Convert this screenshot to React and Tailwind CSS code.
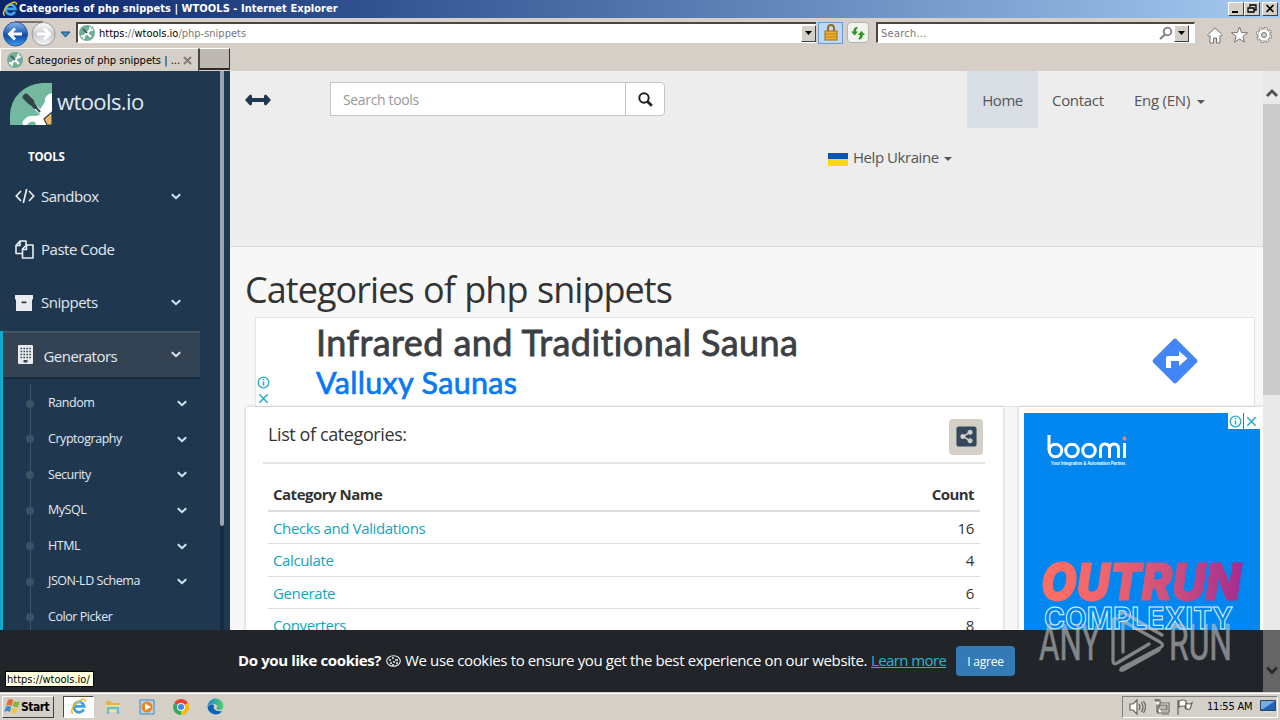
import { FaShareAltSquare } from "react-icons/fa";

const menuItems = [
  { name: "Sandbox", icon: CodeIcon, arrow: true },
  { name: "Paste Code", icon: CopyIcon, arrow: false },
  { name: "Snippets", icon: ArchiveIcon, arrow: true },
];

const generators = [
  { name: "Random", arrow: true },
  { name: "Cryptography", arrow: true },
  { name: "Security", arrow: true },
  { name: "MySQL", arrow: true },
  { name: "HTML", arrow: true },
  { name: "JSON-LD Schema", arrow: true },
  { name: "Color Picker", arrow: false },
];

const categories = [
  { name: "Checks and Validations", count: 16 },
  { name: "Calculate", count: 4 },
  { name: "Generate", count: 6 },
  { name: "Converters", count: 8 },
];

function CodeIcon() {
  return (
    <svg width="20" height="16" viewBox="0 0 20 16" fill="none" stroke="#e7edf3" strokeWidth="1.7">
      <path d="M6 3 1.3 8 6 13M14 3l4.700 5L14 13M11.700 1 8.300 15" />
    </svg>
  );
}

function CopyIcon() {
  return (
    <svg width="19" height="19" viewBox="0 0 19 19" fill="none" stroke="#e7edf3" strokeWidth="1.6" strokeLinejoin="round">
      <path d="M7 13.500H1V5.500L5 1h6v4M5 1v4.500H1" />
      <path d="M7.500 9 11.500 5H18v13H7.500zM11.500 5v4.500h-4" />
    </svg>
  );
}

function ArchiveIcon() {
  return (
    <svg width="18" height="16" viewBox="0 0 18 16">
      <path fill="#e9ebee" d="M0 0h18v4.500H0zM1 4h16v12H1z" />
      <rect x="6.500" y="6.500" width="5" height="1.800" rx=".9" fill="#1f3850" />
    </svg>
  );
}

function BuildingIcon() {
  return (
    <svg width="15" height="19" viewBox="0 0 15 19">
      <rect width="15" height="19" rx="1" fill="#e9ebee" />
      <path stroke="#33434f" strokeWidth="1.500" strokeDasharray="1.600 1.300" d="M2.500 3.500h11M2.500 6.500h11M2.500 9.500h11M2.500 12.500h11" />
      <path fill="#33434f" d="M5.500 15h4v2.500h-4z" />
    </svg>
  );
}

function Chevron() {
  return (
    <svg width="10" height="7" viewBox="0 0 10 7" fill="none" stroke="#d5e4f0" strokeWidth="2">
      <path d="m.8 1.200 4.200 4 4.200-4" />
    </svg>
  );
}

function Caret() {
  return (
    <svg width="8" height="4" viewBox="0 0 8 4">
      <path fill="#555" d="M0 0h8L4 4z" />
    </svg>
  );
}

function SiteIcon() {
  return (
    <svg width="16" height="16" viewBox="0 0 16 16" className="shrink-0">
      <circle cx="8" cy="8" r="8" fill="#6fae98" />
      <path stroke="#fff" strokeWidth="2.200" d="m4 12 8-8" />
      <path stroke="#41515a" strokeWidth="1.700" d="m4 4 4 4" />
      <path stroke="#fff" strokeWidth="2.200" d="m8.500 8.500 3.500 3.500" />
      <circle cx="12" cy="4" r="2.200" fill="#fff" />
      <circle cx="4" cy="12" r="2.200" fill="#fff" />
      <path stroke="#6fae98" strokeWidth="1.500" d="M12 4l2-2M4 12l-2 2" />
    </svg>
  );
}

function LogoIcon() {
  return (
    <svg width="42" height="42" viewBox="0 0 42 42" className="shrink-0">
      <path fill="#72b9a0" d="M0 42V32A34 32 0 0 1 32 0h10v42z" />
      <path fill="#fff" d="M42 10q-8 2-7 9l-6 9 3 3-6 2q-8-1-11 3-4 3-2 6h29z" />
      <path stroke="#fff" strokeWidth="4" d="m25 24 12 11" />
      <path stroke="#34434c" strokeWidth="2" d="m24 22 6 7" />
      <path stroke="#34434c" strokeWidth="6.500" strokeLinecap="round" d="m16 14 5 5" />
      <path stroke="#34434c" strokeWidth="4" strokeLinecap="round" d="m20 18 5 6" />
      <path fill="#e7b565" stroke="#34434c" strokeWidth="1.200" d="m34 36 8-7v13h-5z" />
      <path fill="#72b9a0" d="M17 42q3-5 8-3l1 3z" />
    </svg>
  );
}

function IeIcon({ size = 17 }) {
  return (
    <svg width={size} height={size} viewBox="0 0 18 18" fill="none" className="shrink-0">
      <path stroke="#3aa5e6" strokeWidth="3" d="M14.500 12A5.500 5.500 0 1 1 15 8.800H5" />
      <path stroke="#8ed2f7" strokeWidth="1" d="M4.500 8a5 5 0 0 1 8-2.500" />
      <path stroke="#f0bd24" strokeWidth="1.600" d="M3 16.500C-.5 14 4 6 10 2.800c4-2.100 7-1.800 6 1.400" />
    </svg>
  );
}

function TitleBar() {
  return (
    <div className="flex h-[18px] items-center bg-gradient-to-r from-[#0a246a] to-[#a6caf0] pl-[2px] pr-[2px]">
      <IeIcon size={16} />
      <div className="ml-[1px] flex-1 whitespace-nowrap pt-px text-[11px] font-bold text-white tracking-[0.05px]">
        Categories of php snippets | WTOOLS - Internet Explorer
      </div>
      {["min", "restore", "close"].map((type) => (
        <div
          key={type}
          className="h-[14px] w-4 border border-t-white border-l-white border-r-[#404040] border-b-[#404040] bg-[#d4d0c8] last:ml-[2px]"
        >
          <svg width="14" height="12" viewBox="0 0 14 12" fill="none" stroke="#000" strokeWidth="1.600">
            {type === "min" && <path d="M3 9h6" strokeWidth="2" />}
            {type === "restore" && <path d="M5 4V2h6v5H9M3 5h6v4H3z" strokeWidth="1.300" />}
            {type === "close" && <path d="m3.500 2 7 7m0-7-7 7" />}
          </svg>
        </div>
      ))}
    </div>
  );
}

function DropButton() {
  return (
    <div className="flex h-[17px] w-[15px] items-center justify-center border border-t-white border-l-white border-r-[#404040] border-b-[#404040] bg-[#d4d0c8]">
      <svg width="7" height="4" viewBox="0 0 7 4"><path d="M0 0h7L3.500 4z" /></svg>
    </div>
  );
}

function AddressBar() {
  return (
    <div className="flex h-[30px] items-center bg-[#d6cfc8] pb-[1px] text-[11px]">
      <svg width="74" height="28" viewBox="0 0 74 28" className="shrink-0">
        <defs>
          <linearGradient id="back" x1="0" y1="0" x2="0" y2="1">
            <stop offset="0" stopColor="#8bb6e8" />
            <stop offset=".45" stopColor="#2465c0" />
            <stop offset=".55" stopColor="#0b48ad" />
            <stop offset="1" stopColor="#3da0ef" />
          </linearGradient>
          <linearGradient id="forward" x1="0" y1="0" x2="0" y2="1">
            <stop offset="0" stopColor="#fff" />
            <stop offset=".5" stopColor="#c9ccd0" />
            <stop offset="1" stopColor="#f4f6f8" />
          </linearGradient>
        </defs>
        <path d="M15 3h28" stroke="#77736f" strokeWidth="2" />
        <circle cx="15.500" cy="15" r="12" fill="url(#back)" stroke="#35548b" />
        <circle cx="43.500" cy="15" r="11.500" fill="url(#forward)" stroke="#9a9a9a" />
        <path d="M22 15H10M15 9.500 9.500 15l5.500 5.500" stroke="#fff" strokeWidth="3" fill="none" />
        <path d="M37 15h12M44 9.500l5.500 5.500-5.500 5.500" stroke="#fff" strokeWidth="3" fill="none" />
        <path d="M61 13h9l-4.500 5z" fill="#3690cb" stroke="#204b75" />
      </svg>
      <div className="ml-[2px] flex h-[21px] w-[740px] items-center border-t-2 border-l-2 border-[#51443d] border-b border-b-white bg-white pl-[1px]">
        <SiteIcon />
        <span className="ml-[4px] flex-1 whitespace-nowrap pt-[2px] text-black">
          https:<span className="text-[#777]">//</span>wtools.io<span className="text-[#777]">/php-snippets</span>
        </span>
        <DropButton />
      </div>
      <div className="ml-[2px] flex h-[22px] w-[25px] items-center justify-center border border-[#6a9bd0] bg-[#bcd8f5]">
        <svg width="14" height="17" viewBox="0 0 14 17">
          <path d="M4 8V4a3 3 0 0 1 6 0v4" fill="none" stroke="#936b22" strokeWidth="2" />
          <rect x="1" y="7" width="12" height="9" fill="#f0b52e" stroke="#a16a10" />
          <path d="M1 10h12M1 13h12" stroke="#ba7f16" />
        </svg>
      </div>
      <div className="ml-[4px] flex h-[21px] w-[22px] items-center justify-center rounded-sm border border-[#b5b5b0] bg-[#f1f3ef]">
        <svg width="16" height="16" viewBox="0 0 16 16" fill="#309629">
          <path d="M6 2h1.500v1.200q-1.500.5-1.500 3.300h2.200L4.600 10.500 1 6.500h2.300Q3.300 3 6 2z" />
          <path d="M10 14.500H8.500v-1.200q1.500-.5 1.500-3.300H7.800L11.400 6 15 10h-2.300q0 3.500-2.700 4.500z" />
        </svg>
      </div>
      <div className="ml-[7px] flex h-[21px] w-[319px] items-center border-t-2 border-l-2 border-[#51443d] border-b border-r border-b-white border-r-white bg-white pl-[3px] pr-[5px] text-[#777]">
        <span className="flex-1 pt-[2px] tracking-[0.25px]">Search...</span>
        <svg width="16" height="15" viewBox="0 0 16 15" fill="none" stroke="#84807c" strokeWidth="1.800">
          <circle cx="9.500" cy="5.500" r="3.800" />
          <path d="m7 8.500-5 4.500" strokeWidth="2.200" />
        </svg>
        <DropButton />
      </div>
      <svg width="70" height="22" viewBox="0 0 70 22" className="ml-[11px] mt-[6px]" fill="#fff" stroke="#77726d" strokeWidth="1">
        <path d="m1.500 10 7.500-7 7.500 7-1.500 1.500-1-1V18h-3.500v-5h-3v5H4v-7.500l-1 1z" />
        <path d="m33.500 2 2.100 5.500 5.900.3-4.600 3.700 1.600 5.700-5-3.300-5 3.300 1.600-5.700-4.600-3.700 5.900-.3z" />
        <circle cx="58" cy="10" r="6.800" strokeWidth="2.600" strokeDasharray="3.200 2.140" />
        <circle cx="58" cy="10" r="6.300" stroke="#77726d" />
        <circle cx="58" cy="10" r="6.800" stroke="#fff" strokeWidth="1.400" strokeDasharray="2 3.340" strokeDashoffset="-.6" fill="none" />
        <circle cx="58" cy="10" r="2.500" fill="#d6cfc8" />
      </svg>
    </div>
  );
}

function TabBar() {
  return (
    <div className="flex h-[23px] bg-[#d6cfc8] text-[11px]">
      <div className="flex w-[199px] items-center border-t border-l border-white border-r border-r-[#404040] pl-[6px]">
        <SiteIcon />
        <span className="ml-[5px] flex-1 whitespace-nowrap pt-[2px]">Categories of php snippets | ...</span>
        <svg width="9" height="9" viewBox="0 0 9 9" className="mr-[6px]" stroke="#807b76" strokeWidth="2"><path d="m1 1 7 7m0-7L1 8" /></svg>
      </div>
      <div className="h-[22px] w-[31px] border border-t-white border-l-[#504841] border-r-[#302b28] border-b-2 border-b-[#302b28] bg-[#beb8b2]" />
    </div>
  );
}

function Sidebar() {
  return (
    <aside className="flex w-[230px] shrink-0 bg-[#1f3850] text-[#e2e9f0]">
      <div className="w-[220px]">
        <div className="flex h-[54px] items-end pl-[10px]">
          <LogoIcon />
          <span className="ml-[5px] mb-[9px] whitespace-nowrap text-[22px] leading-[30px] tracking-[-0.6px]">wtools.io</span>
        </div>
        <div className="mt-[23px] h-[18px] pl-7 text-[11.500px] font-bold leading-[18px] tracking-[-0.25px] text-white">TOOLS</div>
        <ul className="mt-[3.600px]">
          {menuItems.map((item) => (
            <li key={item.name} className="flex h-[53.200px] items-center pl-[15px] pr-[39px]">
              <span className="flex w-[26px]"><item.icon /></span>
              <span className="flex-1 text-[15px] tracking-[-0.48px]">{item.name}</span>
              {item.arrow && <Chevron />}
            </li>
          ))}
        </ul>
        <div className="mt-[1.800px] h-[299px] overflow-hidden border-l-[3px] border-[#12aacb]">
          <div className="flex h-[48px] w-[197px] items-center border-t-2 border-b-2 border-t-[#405464] border-b-[#172c3f] bg-[#334354] pl-[15px] pr-[19px]">
            <BuildingIcon />
            <span className="ml-[10.500px] flex-1 pt-[2px] text-[15px] tracking-[-0.55px]">Generators</span>
            <Chevron />
          </div>
          <ul className="ml-[27px] mt-[5px] border-l border-[#415568] pt-[2px]">
            {generators.map((item) => (
              <li key={item.name} className="flex h-[35.600px] items-center pr-[33px]">
                <span className="-ml-[5px] h-[8px] w-[8px] rounded-full bg-[#3d5365]" />
                <span className="ml-[14px] flex-1 text-[12.500px] tracking-[-0.45px]">{item.name}</span>
                {item.arrow && <Chevron />}
              </li>
            ))}
          </ul>
        </div>
      </div>
      <div className="w-1 bg-[#152c42]">
        <div className="h-[455px] rounded-b-sm bg-[#9da6b7]" />
      </div>
    </aside>
  );
}

function Header() {
  return (
    <header className="flex h-[176px] border-b border-[#d9dadc] bg-[#ededed] pl-[15px] text-[15px] tracking-[-0.45px] text-[#555]">
      <svg width="26" height="12" viewBox="0 0 26 12" className="mt-[23px]" fill="#1f3850">
        <path d="M0 6 5 .5 7 1.500V4h12V1.500l2-1L26 6l-5 5.500-2-1V8H7v2.500l-2 1z" />
      </svg>
      <div className="ml-[59px] mt-[11px] flex h-[34px] w-[335px] items-center rounded-r border border-[#c5c5c5] bg-white">
        <span className="flex-1 pl-3 pt-px text-[14px] tracking-[-0.35px] text-[#999]">Search tools</span>
        <span className="flex h-full w-[39px] items-center justify-center border-l border-[#c5c5c5]">
          <svg width="15" height="15" viewBox="0 0 15 15" fill="none" stroke="#222">
            <circle cx="6" cy="6" r="4.700" strokeWidth="2" />
            <path d="m9.500 9.500 4.300 4.300" strokeWidth="2.800" />
          </svg>
        </span>
      </div>
      <nav className="ml-[163px]">
        <div className="ml-[139px] flex h-[57px] items-center whitespace-nowrap">
          <a className="flex h-full w-[71px] items-center justify-center bg-[#d9dee5] pt-px">Home</a>
          <a className="ml-[14px] w-[82px] pt-px tracking-[-0.3px]">Contact</a>
          <a className="w-[63px] pt-px tracking-[-0.25px]">Eng (EN)</a>
          <span className="mt-[4px]"><Caret /></span>
        </div>
        <div className="mt-[19px] flex h-[20px] items-center">
          <div className="mt-[4px] h-[13px] w-5 border-b-[7px] border-[#f8d813] bg-[#0057b8]" />
          <a className="ml-[5px] w-[91px]">Help Ukraine</a>
          <span className="mt-[4px]"><Caret /></span>
        </div>
      </nav>
    </header>
  );
}

function AdInfo() {
  return (
    <svg width="13" height="13" viewBox="0 0 13 13" fill="none" stroke="#24aac5" strokeWidth="1.300">
      <circle cx="6.500" cy="6.500" r="5.300" />
      <path d="M6.500 3v1.300M6.500 5.500v4" strokeWidth="1.500" />
    </svg>
  );
}

function AdClose() {
  return (
    <svg width="13" height="13" viewBox="0 0 13 13" stroke="#24aac5" strokeWidth="1.500">
      <path d="m2.300 2.300 8.400 8.400m0-8.400-8.400 8.400" />
    </svg>
  );
}

function SaunaAd() {
  return (
    <div className="ml-[25px] flex h-[90px] w-[1000px] border border-[#e4e4e4] bg-white">
      <div className="flex w-[15px] flex-col items-center pt-[58px] gap-[3px]">
        <AdInfo />
        <AdClose />
      </div>
      <svg width="500" height="88" viewBox="0 0 500 88" className="ml-[45px] font-[family-name:Lato,sans-serif] [font-variant-ligatures:none]">
        <text x="0" y="37.500" fontSize="36" fontWeight="400" fill="#3c4043" stroke="#3c4043" strokeWidth=".8" textLength="482">Infrared and Traditional Sauna</text>
        <text x="0" y="76" fontSize="30.500" fontWeight="400" fill="#0879f5" stroke="#0879f5" strokeWidth=".7" textLength="201">Valluxy Saunas</text>
      </svg>
      <svg width="46" height="46" viewBox="0 0 46 46" className="ml-[336px] mt-[20px]">
        <rect x="6.500" y="6.500" width="33" height="33" rx="2.500" fill="#4285f4" transform="rotate(45 23 23)" />
        <path fill="#fff" d="M14 30V20q0-2 2-2h11v-5l8.500 7.500L27 28v-5h-8v7z" />
      </svg>
    </div>
  );
}

function CategoryPanel() {
  return (
    <section className="ml-4 h-[300px] w-[757px] bg-white pl-[17px] pr-[18px] shadow-[0_0_3px_#bbb]">
      <div className="flex h-[57px] items-center justify-between border-b-2 border-[#e2e5ea] pl-[5px] pr-[2px]">
        <span className="text-[18px] leading-[21px] tracking-[-0.4px] text-[#333]">List of categories:</span>
        <span className="mt-[4px] flex h-[36px] w-[34px] items-center justify-center rounded-sm bg-[#d4d0c8]">
          <FaShareAltSquare size={23} color="#34495e" />
        </span>
      </div>
      <table className="ml-[5px] mt-[14px] w-[712px] border-collapse text-[15px] text-[#333] tracking-[-0.38px]">
        <thead>
          <tr className="h-[33px] border-b-2 border-[#ddd]">
            <th className="pl-[5px] pt-px text-left tracking-[-0.5px]">Category Name</th>
            <th className="pr-[6px] pt-px text-right tracking-[-0.55px]">Count</th>
          </tr>
        </thead>
        <tbody>
          {categories.map((category) => (
            <tr key={category.name} className="h-[32.500px] border-b border-[#ddd]">
              <td className="pl-[5px] pt-px text-[#12a5c0]">{category.name}</td>
              <td className="pr-[6px] pt-px text-right">{category.count}</td>
            </tr>
          ))}
        </tbody>
      </table>
    </section>
  );
}

function BoomiAd() {
  return (
    <section className="ml-4 h-[300px] w-[244px] bg-white pl-[5px] pt-[6px] shadow-[0_0_3px_#bbb]">
      <div className="relative h-[294px] w-[236px] bg-[#0286f0]">
        <svg width="236" height="294" viewBox="0 0 236 294">
          <defs>
            <linearGradient id="outrun" x1="0" x2="1">
              <stop offset="0" stopColor="#ff6f61" />
              <stop offset=".3" stopColor="#f2656b" />
              <stop offset=".65" stopColor="#cc4f7d" />
              <stop offset="1" stopColor="#a62b91" />
            </linearGradient>
          </defs>
          <g fill="none" stroke="#fff" strokeWidth="3">
            <path d="M25 22v15" />
            <circle cx="31.500" cy="37.500" r="6.300" />
            <circle cx="48" cy="37.500" r="6.300" />
            <circle cx="65" cy="37.500" r="6.300" />
            <path d="M76.500 45v-9q0-5 4.500-5t4.500 5v9M85.500 36q0-5 4.500-5t4.500 5v9M100.500 30v15" />
          </g>
          <circle cx="100.500" cy="25.500" r="2" fill="#ff7c66" />
          <text x="27" y="52" fontSize="5" fontWeight="bold" fill="#fff" fontFamily="Liberation Sans" textLength="75" lengthAdjust="spacingAndGlyphs">Your Integration &amp; Automation Partner.</text>
          <text x="17" y="187" fontSize="51" fontWeight="900" fontStyle="italic" fontFamily="Inter, sans-serif" fill="url(#outrun)" stroke="url(#outrun)" strokeWidth="1" textLength="200" lengthAdjust="spacingAndGlyphs">OUTRUN</text>
          <text x="20" y="216" fontSize="30" fontWeight="700" fontFamily="Inter, sans-serif" fill="none" stroke="#e6f5ff" strokeWidth="1" textLength="189" lengthAdjust="spacingAndGlyphs">COMPLEXITY</text>
        </svg>
        <div className="absolute right-0 top-0 flex h-4 w-8 items-center justify-between bg-white pl-px pr-[2px]">
          <AdInfo />
          <span className="h-full w-px bg-[#0286f0]" />
          <AdClose />
        </div>
      </div>
    </section>
  );
}

function PageScrollbar() {
  return (
    <div className="w-[17px] shrink-0 bg-[#e9e9e9]">
      <div className="flex h-[33px] items-end justify-center pb-[6px]">
        <svg width="12" height="10" viewBox="0 0 12 10" fill="none" stroke="#505050" strokeWidth="2.800"><path d="m1 8 5-5 5 5" /></svg>
      </div>
      <div className="h-[291px] bg-[#cbcbcb]" />
    </div>
  );
}

function CookieBanner() {
  return (
    <div className="absolute inset-x-0 bottom-0 flex h-[62px] bg-[#212529] pl-[238px] text-[15px] text-white">
      <div className="flex h-full w-[1025px] items-center whitespace-nowrap">
        <b className="w-[148px] pb-[2px] tracking-[-0.38px]">Do you like cookies?</b>
        <svg width="15" height="12" viewBox="0 0 15 12" fill="none" stroke="#eee" strokeWidth="1.100">
          <ellipse cx="7.500" cy="6" rx="6.800" ry="5.300" />
          <path d="M3 5h2M6 3h2M9 5h3M4 8h2M7 7h2M10 8h2M6 10h2" strokeWidth="1.500" />
        </svg>
        <span className="ml-[4px] w-[466px] pb-[2px] tracking-[-0.37px]">We use cookies to ensure you get the best experience on our website.</span>
        <a className="w-[85px] pb-[2px] tracking-[-0.6px] text-[#24b7cc] underline">Learn more</a>
        <button className="h-[30px] w-[59px] rounded-sm bg-[#337ab7] pt-px text-[12px] tracking-[-0.2px]">I agree</button>
      </div>
      <div className="flex w-[17px] justify-center bg-[#656565] pt-[36px]">
        <svg width="12" height="9" viewBox="0 0 12 9" fill="none" stroke="#27292b" strokeWidth="2.800"><path d="m1 1.500 5 5 5-5" /></svg>
      </div>
      <div className="absolute bottom-[5px] left-[5px] flex h-[16px] w-[89px] items-center border border-black bg-[#ffffe1] pl-px pt-[2px] text-[11px] text-black font-[family-name:'DejaVu_Sans_Condensed','DejaVu_Sans',sans-serif]">
        https://wtools.io/
      </div>
    </div>
  );
}

function Watermark() {
  return (
    <svg width="196" height="64" viewBox="0 0 196 64" className="absolute bottom-[19px] left-[1037px] overflow-visible opacity-60" fill="none" stroke="#c5c7c9" strokeWidth="3.2">
      {/* play button */}
      <path
        d="M81 10q-5-2-5 2v40q0 4 4 2L112 35M86 43V12l37 21q5 3 0 6L85 59q-3 3 1 2l36-20M82 6q3-4 7-1l36 21"
        strokeLinecap="round"
        strokeLinejoin="round"
      />
      <g fill="#c5c7c9" stroke="#c5c7c9" strokeWidth=".7" fontFamily="Roboto, sans-serif" fontSize="50">
        <text x="2" y="50.500" textLength="61" lengthAdjust="spacingAndGlyphs">ANY</text>
        <text x="132" y="50.500" textLength="63" lengthAdjust="spacingAndGlyphs">RUN</text>
      </g>
    </svg>
  );
}

function Taskbar() {
  return (
    <div className="flex h-[28px] items-center border-t border-[#d4d0c8] bg-[#d4d0c8] shadow-[inset_0_1px_0_#fff] text-[11px]">
      <button className="ml-[2px] flex h-[22px] w-[52px] items-center border border-t-white border-l-white border-r-[#404040] border-b-[#404040] font-bold">
        <svg width="17" height="17" viewBox="0 0 17 17" className="ml-[1px] shrink-0">
          <path fill="#e66b32" d="M4 2q3-2 5 0L8 8Q5 6 2 8z" />
          <path fill="#82b83b" d="M10 3q3 2 6 0l-2 6q-3 1-5-1z" />
          <path fill="#398bd1" d="M2 9q3-2 5 0l-1 5q-3-2-6 0z" />
          <path fill="#f3c72e" d="M8 10q3 2 6 0l-2 5q-3 1-5-1z" />
        </svg>
        <span className="pt-px text-[12px] tracking-[-0.5px]">Start</span>
      </button>
      <div className="ml-[9px] flex h-[22px] w-[31px] items-center justify-center border border-t-[#504841] border-l-[#504841] border-white bg-white">
        <IeIcon />
      </div>
      <svg width="16" height="16" viewBox="0 0 16 16" className="ml-[11px]">
        <path fill="#d9b84f" d="M1 2h5l1 2h8v9H1z" />
        <path fill="#f4df91" d="M1 6h14v7H1z" />
        <path fill="none" stroke="#67bfd2" strokeWidth="2.500" d="M3 15V9h10v6" />
      </svg>
      <svg width="16" height="16" viewBox="0 0 16 16" className="ml-[18px]">
        <path fill="#b8d3ea" stroke="#4389bf" d="M1 1h14v14H1z" />
        <circle cx="8" cy="8" r="5.500" fill="#ef8514" />
        <path fill="#fff" d="m6 4.500 6 3.500-6 3.500z" />
      </svg>
      <svg width="16" height="16" viewBox="0 0 16 16" className="ml-[18px]">
        <path fill="#ea4335" d="M8 8 1.200 4A8 8 0 0 1 15 4z" />
        <path fill="#fbbc05" d="M8 8l7-4a8 8 0 0 1-7.500 12z" />
        <path fill="#34a853" d="M8 8v8A8 8 0 0 1 1.200 4z" />
        <circle cx="8" cy="8" r="4" fill="#fff" />
        <circle cx="8" cy="8" r="3" fill="#4285f4" />
      </svg>
      <svg width="17" height="17" viewBox="0 0 17 17" className="ml-[18px]">
        <defs>
          <linearGradient id="edge"><stop stopColor="#168bd7" /><stop offset="1" stopColor="#55ce69" /></linearGradient>
        </defs>
        <path fill="url(#edge)" d="M.5 9A8 8 0 0 1 16.500 8q0 4-5 4-2 0-2-2 2-3-2-4Q2 5 .5 9z" />
        <path fill="#0b62b6" d="M.5 9Q3 5 7 7q-2 7 8 6-2 3.500-6.500 3.500A8 8 0 0 1 .5 9z" />
      </svg>
      <div className="ml-auto mr-[2px] flex h-[22px] w-[156px] items-center border border-t-[#808080] border-l-[#808080] border-b-white border-r-white pl-[5px]">
        <svg width="66" height="18" viewBox="0 0 66 18" fill="#fff" stroke="#65625e" strokeWidth="1.200">
          <path d="M2 6h3l4-4v14l-4-4H2z" />
          <path fill="none" d="M11 6q2 3 0 6M13.500 4q3 5 0 10M15.500 3q4 6 0 12" />
          <path d="M29 5h12v9H29z" />
          <path fill="#bbb8b2" d="M31 7h8v5h-8z" />
          <path d="M26 2h6v5h-2v8h4M34 16h7M28 1v3M30 1v3" />
          <path d="M50 2v15M51 3q4-2 7 0v6q-3-2-7 0zM58 5q3 2 6 0l-2 6q-3 1-5-1z" />
        </svg>
        <span className="ml-[13px] w-[53px] whitespace-nowrap pt-[2px] tracking-[-0.2px]">11:55 AM</span>
        <svg width="16" height="13" viewBox="0 0 16 13"><path fill="#2462b5" stroke="#294568" d="M.5.500h15v10H.5z" /><path fill="#79acdf" d="M1 1h14L3 9H1z" /><path fill="#ddd" d="M4 11h8v1.500H4z" /></svg>
      </div>
    </div>
  );
}

export default function App() {
  return (
    <div className="flex h-[720px] w-[1280px] flex-col overflow-hidden text-black font-[family-name:'DejaVu_Sans_Condensed','DejaVu_Sans',sans-serif]">
      <TitleBar />
      <AddressBar />
      <TabBar />
      <div className="relative flex h-[621px] overflow-hidden font-[family-name:'Open_Sans',sans-serif]">
        <Sidebar />
        <main className="w-[1033px] bg-[#f7f7f7]">
          <Header />
          <h1 className="h-[70px] pl-[15px] pt-[18px] text-[36px] leading-[50px] tracking-[-0.95px] [word-spacing:1px] text-[#333]">
            Categories of php snippets
          </h1>
          <SaunaAd />
          <div className="flex">
            <CategoryPanel />
            <BoomiAd />
          </div>
        </main>
        <PageScrollbar />
        <CookieBanner />
        <Watermark />
      </div>
      <Taskbar />
    </div>
  );
}
